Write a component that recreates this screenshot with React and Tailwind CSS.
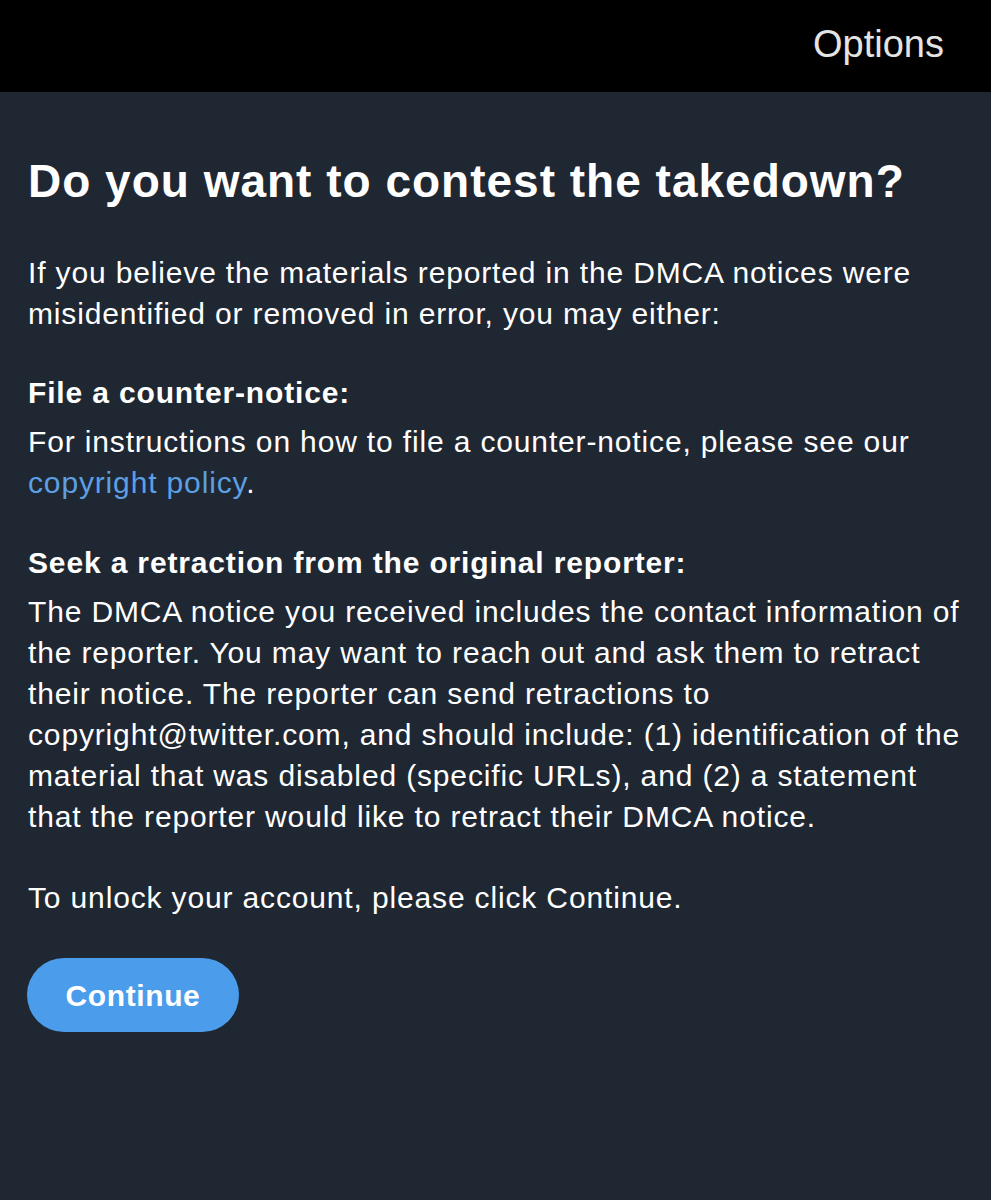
export default function App() {
  return (
    <div
      className="min-h-[1200px] w-full bg-[#1f2733] text-white"
      style={{ fontFamily: '"Liberation Sans", Arial, sans-serif' }}
    >
      {/* Top bar */}
      <header className="h-[92px] bg-black flex items-center justify-end pr-[47px]">
        <button className="text-[38px] font-light text-[#e4e4e4] pb-[4px]">
          Options
        </button>
      </header>

      {/* Content */}
      <main className="pl-[28px] pr-[16px] pt-[62px]">
        <h1 className="text-[46px] leading-[54px] font-bold tracking-[1px] whitespace-nowrap">
          Do you want to contest the takedown?
        </h1>

        <div className="mt-[44px] text-[30px] leading-[41px] tracking-[0.85px] whitespace-nowrap">
          <p>
            If you believe the materials reported in the DMCA notices were
            <br />
            misidentified or removed in error, you may either:
          </p>

          <h2 className="mt-[38px] font-bold tracking-[0.85px]">
            File a counter-notice:
          </h2>
          <p className="mt-[8px]">
            For instructions on how to file a counter-notice, please see our
            <br />
            <a className="text-[#5c9fe2]">copyright policy</a>.
          </p>

          <h2 className="mt-[39px] font-bold">
            Seek a retraction from the original reporter:
          </h2>
          <p className="mt-[8px]">
            The DMCA notice you received includes the contact information of
            <br />
            the reporter. You may want to reach out and ask them to retract
            <br />
            their notice. The reporter can send retractions to
            <br />
            copyright@twitter.com, and should include: (1) identification of the
            <br />
            material that was disabled (specific URLs), and (2) a statement
            <br />
            that the reporter would like to retract their DMCA notice.
          </p>

          <p className="mt-[40px]">
            To unlock your account, please click Continue.
          </p>
        </div>

        <button className="mt-[40px] h-[74px] w-[212px] -ml-[1px] rounded-full bg-[#4b9deb] text-[30px] font-bold tracking-[0.6px] text-white">
          Continue
        </button>
      </main>
    </div>
  );
}
